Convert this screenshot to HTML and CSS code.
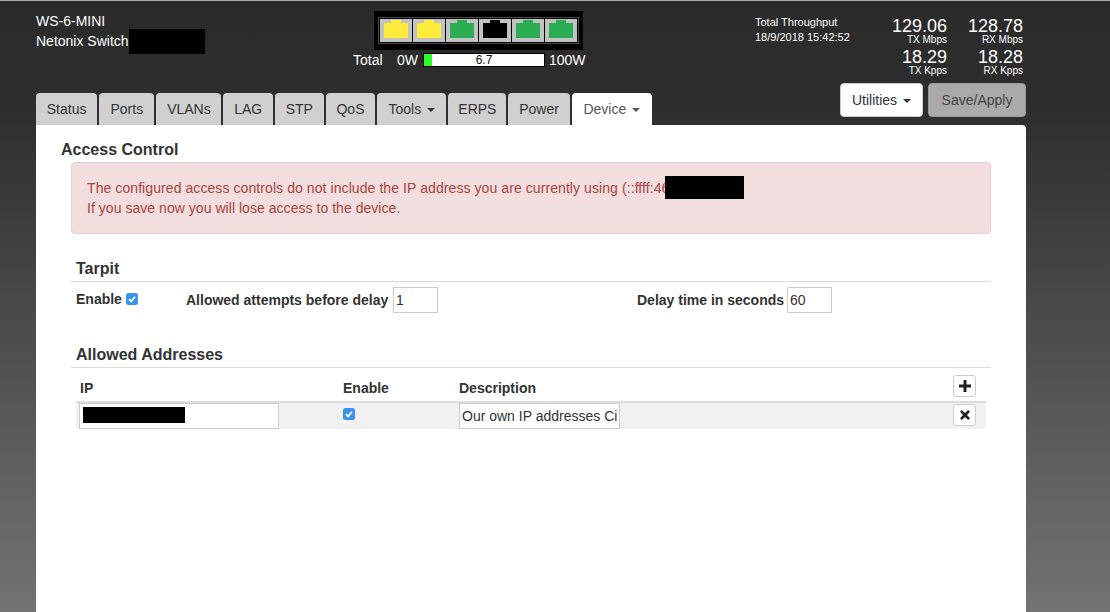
FILE: index.html
```html
<!DOCTYPE html>
<html lang="en">
<head>
<meta charset="utf-8">
<title>Netonix Switch</title>
<link rel="stylesheet" href="styles.css">
</head>
<body>
<div class="page">
  <header class="top">
    <div class="ident">
      <div class="ident-line">WS-6-MINI</div>
      <div class="ident-line ident-name">Netonix Switch<span class="redact redact-name"></span></div>
    </div>
    <div class="switch-wrap">
      <div class="switch">
        <div class="strip">
          <div class="port"><svg width="24" height="18" viewBox="0 0 24 18"><path class="p-y" d="M0 3h7V0h10v3h7v15H0z"/></svg></div>
          <div class="port"><svg width="24" height="18" viewBox="0 0 24 18"><path class="p-y" d="M0 3h7V0h10v3h7v15H0z"/></svg></div>
          <div class="port"><svg width="24" height="18" viewBox="0 0 24 18"><path class="p-g" d="M0 3h7V0h10v3h7v15H0z"/></svg></div>
          <div class="port"><svg width="24" height="18" viewBox="0 0 24 18"><path class="p-k" d="M0 3h7V0h10v3h7v15H0z"/></svg></div>
          <div class="port"><svg width="24" height="18" viewBox="0 0 24 18"><path class="p-g" d="M0 3h7V0h10v3h7v15H0z"/></svg></div>
          <div class="port"><svg width="24" height="18" viewBox="0 0 24 18"><path class="p-g" d="M0 3h7V0h10v3h7v15H0z"/></svg></div>
        </div>
      </div>
      <div class="power">
        <span class="power-total">Total</span>
        <span class="power-min">0W</span>
        <div class="bar"><div class="bar-fill" style="width:6.7%"></div><span class="bar-val">6.7</span></div>
        <span>100W</span>
      </div>
    </div>
    <div class="through">
      <div>Total Throughput</div>
      <div class="through-date">18/9/2018 15:42:52</div>
    </div>
    <div class="stats">
      <div class="stat"><b>129.06</b><small>TX Mbps</small></div>
      <div class="stat"><b>128.78</b><small>RX Mbps</small></div>
      <div class="stat"><b>18.29</b><small>TX Kpps</small></div>
      <div class="stat"><b>18.28</b><small>RX Kpps</small></div>
    </div>
  </header>

  <div class="navrow">
    <nav class="tabs">
      <a class="tab">Status</a>
      <a class="tab tab-wide">Ports</a>
      <a class="tab">VLANs</a>
      <a class="tab">LAG</a>
      <a class="tab">STP</a>
      <a class="tab">QoS</a>
      <a class="tab tab-wide">Tools <i class="caret"></i></a>
      <a class="tab tab-narrow">ERPS</a>
      <a class="tab">Power</a>
      <a class="tab tab-active">Device <i class="caret"></i></a>
    </nav>
    <div class="actions">
      <button class="btn btn-white">Utilities <i class="caret"></i></button>
      <button class="btn btn-gray">Save/Apply</button>
    </div>
  </div>

  <main class="card">
    <h1 class="title">Access Control</h1>
    <div class="alert">
      <div class="alert-line">The configured access controls do not include the IP address you are currently using (::ffff:46<span class="redact redact-ip"></span></div>
      <div class="alert-line2">If you save now you will lose access to the device.</div>
    </div>

    <section class="tarpit">
      <h2 class="sect">Tarpit</h2>
      <div class="form-row">
        <label class="f-enable">Enable <span class="check"><svg width="12" height="12" viewBox="0 0 12 12"><path d="M3 6.2l2.1 2.2L9 3.8" fill="none" stroke="#fff" stroke-width="1.7"/></svg></span></label>
        <label class="f-attempts"><span class="f-text">Allowed attempts before delay</span><input class="num" value="1"></label>
        <label class="f-delay"><span class="f-text">Delay time in seconds</span><input class="num" value="60"></label>
      </div>
    </section>

    <section class="allowed">
      <h2 class="sect">Allowed Addresses</h2>
      <table class="tbl">
        <thead>
          <tr>
            <th class="c-ip">IP</th>
            <th class="c-en">Enable</th>
            <th class="c-desc">Description</th>
            <th class="c-act"><button class="ico"><svg width="12" height="12" viewBox="0 0 12 12"><path d="M4.500 0h3v4.500H12v3H7.500V12h-3V7.500H0v-3h4.500z" fill="#222"/></svg></button></th>
          </tr>
        </thead>
        <tbody>
          <tr>
            <td class="c-ip"><div class="ip-wrap"><input class="ip" value=""><span class="redact redact-addr"></span></div></td>
            <td class="c-en"><span class="check"><svg width="12" height="12" viewBox="0 0 12 12"><path d="M3 6.2l2.1 2.2L9 3.8" fill="none" stroke="#fff" stroke-width="1.7"/></svg></span></td>
            <td class="c-desc"><input class="desc" value="Our own IP addresses City"></td>
            <td class="c-act"><button class="ico ico-x"><svg width="10" height="10" viewBox="0 0 11 11"><path d="M2 0L5.500 3.300 9 0 11 2 7.700 5.500 11 9 9 11 5.500 7.700 2 11 0 9 3.300 5.500 0 2z" fill="#222"/></svg></button></td>
          </tr>
        </tbody>
      </table>
    </section>
  </main>
</div>
</body>
</html>
```
FILE: styles.css
```css
* { box-sizing: border-box; }
html, body { margin: 0; height: 100%; overflow: hidden; }
body {
  font-family: "Liberation Sans", Arial, sans-serif;
  font-size: 14px;
  color: #333;
  background: linear-gradient(to bottom, #2a2a2a 0, #2e2e2e 110px, #737373 612px);
}
.page { width: 1110px; height: 612px; border-top: 1px solid #a8a8a8; }

.top { display: flex; height: 92px; color: #fff; }
.ident { width: 374px; padding: 10px 0 0 36px; font-size: 14px; line-height: 20px; }
.ident-line { height: 20px; }
.ident-name { position: relative; }
.redact { position: absolute; background: #000; display: block; }
.redact-name { left: 93px; top: -2px; width: 76px; height: 25px; }

.switch-wrap { width: 209px; padding-top: 10px; position: relative; }
.switch { width: 209px; height: 39px; background: #000; padding: 6px 4px 0; }
.strip { display: flex; gap: 1px; width: 201px; height: 27px; background: #000; border: 1px solid #4a4a4a; padding: 1px; }
.port {
  width: 32px; height: 23px; background: #c2c2c2;
  display: flex; justify-content: center; padding-top: 1px;
}
.p-y { fill: #ffeb3b; }
.p-g { fill: #2bae53; }
.p-k { fill: #000; }
.power {
  display: flex; align-items: center; margin: 3px 0 0 -21px; width: 240px;
  height: 14px; line-height: 14px; white-space: nowrap;
}
.power-total { width: 44px; }
.power-min { width: 26px; }
.bar { position: relative; width: 122px; height: 14px; background: #fff; border: 1px solid #000; margin-right: 4px; text-align: center; flex: none; }
.bar-fill { position: absolute; left: 0; top: 0; bottom: 0; background: #2efc2e; }
.bar-val { position: relative; display: block; color: #111; font-size: 12px; line-height: 12px; }

.through { margin-left: 172px; padding-top: 14px; font-size: 11px; line-height: 15px; width: 137px; }
.stats { display: grid; grid-template-columns: 55px 76px; align-content: start; padding-top: 18px; width: 131px; }
.stat { text-align: right; height: 31px; display: flex; flex-direction: column; }
.stat b { font-weight: 400; font-size: 18px; line-height: 15px; }
.stat small { font-size: 10px; line-height: 11px; white-space: nowrap; }

.navrow { display: flex; height: 32px; padding-left: 36px; position: relative; }
.tabs { display: flex; gap: 2px; width: 804px; }
.tab {
  height: 32px; line-height: 32px; padding: 0 10.750px; background: #d0d0d0; color: #333;
  border-radius: 4px 4px 0 0; white-space: nowrap;
}
.tab-wide { padding: 0 11.250px; }
.tab-narrow { padding: 0 10px; }
.tab-active { background: #fff; color: #555; padding: 0 11.750px; }
.caret {
  display: inline-block; width: 0; height: 0; margin-left: 2px; vertical-align: middle;
  border-top: 4px solid currentColor; border-left: 4px solid transparent; border-right: 4px solid transparent;
}
.actions { position: absolute; left: 840px; top: -10px; display: flex; gap: 5px; }
.btn {
  height: 34px; font: 14px "Liberation Sans", Arial, sans-serif; border-radius: 4px;
  border: 1px solid #ccc; padding: 0; color: #333;
}
.btn-white { width: 83px; background: #fff; }
.btn-gray { width: 98px; background: #aaa; border-color: #999; color: #444; }

.card {
  width: 990px; height: 488px; margin-left: 36px; background: #fff;
  border-radius: 0 4px 0 0; padding: 16px 35px 0 25px;
}
.title { margin: 0; font-size: 16px; line-height: 18px; font-weight: 700; }
.alert {
  margin: 3px 0 0 10px; height: 72px; padding: 15px; background: #f2dede; border: 1px solid #ebccd1;
  border-radius: 4px; color: #a94442; line-height: 20px;
}
.alert-line { position: relative; letter-spacing: .08px; }
.alert-line2 { letter-spacing: .04px; }
.redact-ip { left: 578px; top: -2px; width: 79px; height: 23px; }

.sect { margin: 0; font-size: 16px; line-height: 18px; font-weight: 700; padding: 0 0 3px 5px; border-bottom: 1px solid #ddd; color: #333; height: 22px; }
.tarpit { margin: 26px 0 0 10px; }
.form-row { display: flex; align-items: center; height: 26px; margin-top: 5px; padding-left: 5px; font-weight: 700; }
.f-enable { width: 110px; position: relative; top: -1px; flex: none; }
.f-attempts { width: 451px; display: flex; align-items: center; flex: none; }
.f-delay { display: flex; align-items: center; }
.f-attempts .f-text { width: 207px; }
.f-delay .f-text { width: 150px; }
.num {
  width: 45px; height: 26px; border: 1px solid #ccc; padding: 0 2px; margin: 0;
  font: 14px "Liberation Sans", Arial, sans-serif; color: #333;
}
.check {
  display: inline-block; width: 12px; height: 12px; border-radius: 2.500px; background: #3b93f0;
  vertical-align: -1px; line-height: 0;
}
.allowed { margin: 33px 0 0 10px; }
.tbl { margin-left: 5px; width: 910px; border-collapse: collapse; table-layout: fixed; }
.tbl th { text-align: left; height: 34px; padding: 6px 0 0 0; border-bottom: 2px solid #ddd; font-size: 14px; vertical-align: middle; }
.tbl td { height: 26px; padding: 0; background: #f1f1f1; vertical-align: top; }
.c-ip { width: 267px; }
.tbl th.c-ip { padding-left: 4px; }
.c-en { width: 116px; }
.c-desc { width: 494px; }
.tbl td.c-ip { padding-left: 3px; }
.tbl td.c-en .check { margin-top: 5px; display: block; }
.ip-wrap { position: relative; width: 200px; }
.ip, .desc {
  display: block; height: 26px; border: 1px solid #ccc; padding: 0 2px; background: #fff;
  font: 14px "Liberation Sans", Arial, sans-serif; color: #333;
}
.ip { width: 200px; }
.desc { width: 161px; }
.redact-addr { left: 4px; top: 4px; width: 102px; height: 16px; }
.ico {
  width: 23px; height: 22px; padding: 0; background: #fff; border: 1px solid #ccc; border-radius: 3px;
  display: flex; align-items: center; justify-content: center;
}
.ico-x { margin-top: 1px; }
.tbl th .ico { margin-top: -3px; }
```
